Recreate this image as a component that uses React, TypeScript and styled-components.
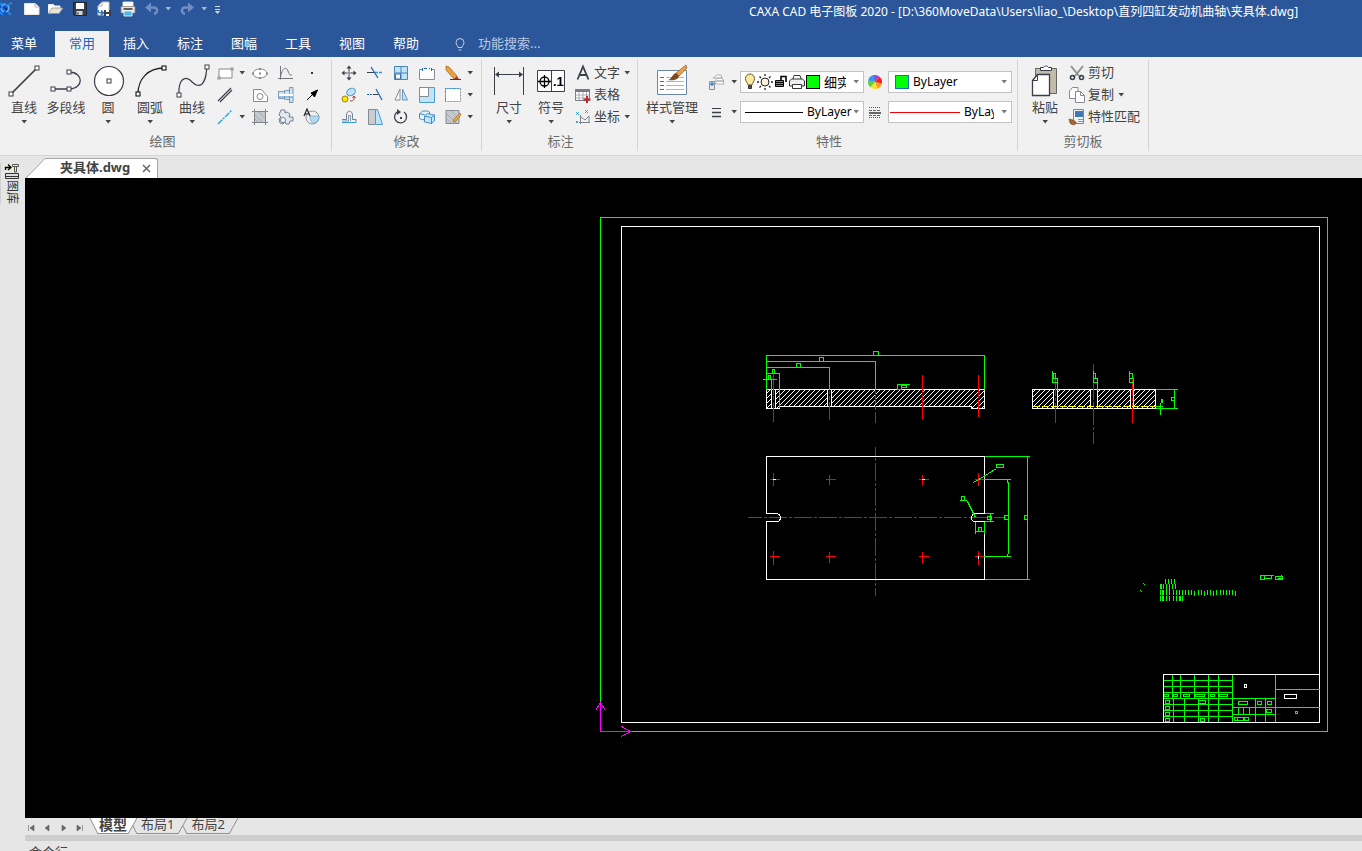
import React from 'react';
import styled, { createGlobalStyle } from 'styled-components';

const C = {
  blue: '#2b579a',
  ribbon: '#f1f1f1',
  chrome: '#e6e6e6',
  line: '#d4d4d4',
  text: '#444444',
  muted: '#6a6a6a',
  ink: '#3b3f4a',
  sky: '#bfe4f8',
  azure: '#2f9bdc',
  green: '#00ff00',
};

const Global = createGlobalStyle`
  *, *::before, *::after { box-sizing: border-box; }
  body {
    margin: 0;
    background: ${C.chrome};
    color: ${C.text};
    font-family: 'Noto Sans', 'Noto Sans CJK SC', sans-serif;
    font-size: 13px;
  }
  button, input, select { font: inherit; color: inherit; }
  button { border: 0; padding: 0; background: none; }
  svg { display: block; flex: none; overflow: visible; }
`;

const Page = styled.div`
  display: flex;
  flex-direction: column;
  height: 100vh;
  overflow: hidden;
`;

/* ---------- header ---------- */
const Header = styled.header`
  background: ${C.blue};
  color: #fff;
`;
const TitleBar = styled.div`
  display: grid;
  grid-template-columns: 55% 1fr;
  height: 31px;
  padding-top: 1px;
`;
const QuickAccess = styled.div`
  display: flex;
  align-items: center;
  gap: 8px;
  height: 16px;
`;
const IconButton = styled.button`
  display: flex;
  align-items: center;
  gap: 4px;
`;
const Title = styled.h1`
  margin: 0;
  font-size: 12px;
  font-weight: 400;
  line-height: 22px;
  white-space: nowrap;
`;
const TabRow = styled.nav`
  display: flex;
  height: 26px;
`;
const MenuButton = styled.button`
  width: 48px;
  margin-right: 7px;
  padding-bottom: 4px;
`;
const RibbonTab = styled.button<{ $active?: boolean }>`
  width: 54px;
  padding-bottom: 4px;
  background: ${p => (p.$active ? C.ribbon : 'transparent')};
  color: ${p => (p.$active ? '#1a66bd' : '#fff')};
`;
const Search = styled.label`
  display: flex;
  align-items: center;
  gap: 10px;
  margin-left: 19px;
`;
const SearchInput = styled.input`
  width: 120px;
  padding: 0 0 3px;
  border: 0;
  outline: 0;
  background: none;
  line-height: 20px;
  &::placeholder { color: #b9c9e4; opacity: 1; }
`;

/* ---------- ribbon ---------- */
const Ribbon = styled.section`
  display: flex;
  padding: 3px 0 4px;
  background: ${C.ribbon};
  border-bottom: 1px solid ${C.line};
`;
const Group = styled.section<{ $pad: number; $right?: number }>`
  display: flex;
  flex-direction: column;
  padding: 2px ${p => p.$right ?? 5}px 0 ${p => p.$pad}px;
  border-right: 1px solid ${C.line};
`;
const GroupBody = styled.div`
  display: flex;
  height: 66px;
`;
const GroupName = styled.h2`
  margin: 0;
  padding: 3px 0 0 2px;
  font-size: 13px;
  font-weight: 400;
  line-height: 20px;
  text-align: center;
  color: ${C.muted};
`;
const BigButton = styled.button<{ $wide?: boolean }>`
  display: flex;
  flex-direction: column;
  align-items: center;
  width: ${p => (p.$wide ? 56 : 42)}px;
  padding-top: 3px;
  line-height: 20px;
  white-space: nowrap;
`;
const BigCaret = styled.span`
  padding-top: 3px;
`;
const ToolGrid = styled.div<{ $columns: string }>`
  display: grid;
  grid-template-columns: ${p => p.$columns};
  grid-auto-rows: 22px;
  padding-left: 4px;
`;
const Tool = styled.button`
  display: flex;
  align-items: center;
  gap: 5px;
`;
const ToolList = styled.div`
  display: flex;
  flex-direction: column;
  padding-left: 3px;
`;
const TextTool = styled.button`
  display: flex;
  align-items: center;
  gap: 3px;
  height: 22px;
  white-space: nowrap;
`;
const ToolText = styled.span`
  padding-bottom: 3px;
  line-height: 18px;
`;
const PropertyRows = styled.div`
  display: flex;
  flex-direction: column;
  gap: 8px;
  padding: 9px 0 0 8px;
`;
const PropertyRow = styled.div`
  display: flex;
  align-items: center;
  height: 22px;
`;
const PropertyTool = styled.button`
  display: flex;
  align-items: center;
  gap: 6px;
  width: 32px;
`;
const WheelTool = styled.button`
  margin: 0 5px 0 3px;
`;
const Combo = styled.label<{ $pad: number }>`
  display: flex;
  align-items: center;
  width: 124px;
  height: 22px;
  padding: 0 3px 0 ${p => p.$pad}px;
  border: 1px solid #c3c3c3;
  background: #fff;
  color: #000;
`;
const ComboSelect = styled.select<{ $size?: number }>`
  flex: 1;
  min-width: 0;
  padding: 0;
  border: 0;
  outline: 0;
  appearance: none;
  background: none;
  font-size: ${p => p.$size ?? 12}px;
  line-height: 18px;
`;
const ComboArrow = styled.span`
  padding-left: 6px;
`;
const LinePreview = styled.span<{ $color: string; $width: number }>`
  flex: none;
  width: ${p => p.$width}px;
  height: 1px;
  margin-right: 4px;
  background: ${p => p.$color};
`;
const Swatch = styled.span<{ $edge: string; $gap: number }>`
  flex: none;
  width: 14px;
  height: 14px;
  margin-right: ${p => p.$gap}px;
  border: 1px solid ${p => p.$edge};
  background: ${C.green};
`;

/* ---------- workspace ---------- */
const Workspace = styled.main`
  display: flex;
  flex: 1;
  min-height: 0;
`;
const Dock = styled.aside`
  flex: none;
  width: 25px;
  padding-top: 7px;
`;
const DockTab = styled.button`
  display: flex;
  flex-direction: column;
  align-items: center;
  gap: 1px;
  width: 22px;
  border-left: 1px solid #cfcfcf;
  color: #333;
`;
const DockText = styled.span`
  writing-mode: vertical-rl;
  text-orientation: sideways;
  font-size: 12px;
  line-height: 16px;
`;
const Column = styled.div`
  display: flex;
  flex: 1;
  flex-direction: column;
  min-width: 0;
`;
const DocTabs = styled.div`
  display: flex;
  align-items: flex-end;
  height: 22px;
`;
const DocTab = styled.div`
  display: flex;
  align-items: center;
  gap: 12px;
  height: 20px;
  padding: 0 6px 0 14px;
  border: solid #a5a5a5;
  border-width: 1px 1px 0 0;
  border-radius: 0 3px 0 0;
  background: #fff;
`;
const DocName = styled.button`
  padding-bottom: 3px;
  font-size: 13px;
  font-weight: 700;
  line-height: 18px;
`;
const Canvas = styled.div`
  flex: 1;
  min-height: 0;
  overflow: hidden;
  background: #000;
`;
const SheetBar = styled.div`
  display: flex;
  height: 17px;
`;
const SheetNav = styled.div`
  display: flex;
  align-items: center;
  gap: 8px;
  padding: 2px 7px 0 2px;
`;
const SheetTab = styled.button<{ $active?: boolean }>`
  height: 16px;
  padding: 0 ${p => (p.$active ? 1 : 4)}px 2px;
  border-bottom: 1px solid #8f8f8f;
  background: ${p => (p.$active ? '#fff' : 'transparent')};
  font-size: ${p => (p.$active ? 14 : 13)}px;
  font-weight: ${p => (p.$active ? 700 : 400)};
  line-height: 13px;
  white-space: nowrap;
`;
const Splitter = styled.div`
  height: 6px;
  background: #cdcdcd;
`;
const CommandBar = styled.div`
  height: 10px;
  padding-left: 4px;
  overflow: hidden;
  line-height: 22px;
`;

/* ---------- icons ---------- */
type IconProps = { size?: number; w?: number; children: React.ReactNode };
const Icon = ({ size = 16, w, children }: IconProps) => (
  <svg width={w ?? size} height={size} viewBox={`0 0 ${w ?? size} ${size}`} fill="none" stroke={C.ink} aria-hidden="true">
    {children}
  </svg>
);
const Caret = ({ color = '#444' }: { color?: string }) => (
  <svg width="8" height="4" viewBox="0 0 8 4" aria-hidden="true">
    <path d="M1.500 0h5.500L4.200 3.500z" fill={color} />
  </svg>
);
const Nodes = ({ at, s = 4, fill = '#fff' }: { at: [number, number][]; s?: number; fill?: string }) => (
  <>
    {at.map(([x, y]) => (
      <rect key={`${x}-${y}`} x={x - s / 2} y={y - s / 2} width={s} height={s} fill={fill} strokeWidth="1" />
    ))}
  </>
);

const AppLogo = () => (
  <Icon>
    <circle cx="1" cy="8" r="7" fill="#0d56c4" stroke="none" />
    <circle cx="5" cy="7" r="4" fill="#1b6fe0" stroke="#5fb4f5" strokeWidth="1.400" strokeDasharray="5 2" />
    <path d="M-2 4l4-2M0 11l3 3M8 11l3 3M9 3l3-1" stroke="#1d86e6" strokeWidth="2" />
    <path d="M4 6l3 3" stroke="#0a2f7a" strokeWidth="2" />
  </Icon>
);
const NewIcon = () => (
  <Icon><path d="M.5 2.500h10.500l4 3.500v7.500H.5z" fill="#fff" stroke="#e9e6df" /><path d="M11 2.500V6h4" stroke="#b7b2a8" /></Icon>
);
const OpenIcon = () => (
  <Icon><path d="M.5 12.500v-9h5l1 1.500H12v3" fill="#fff" stroke="#eee" /><path d="M.5 12.500L4 7h11L11 12.500z" fill="#e8e4da" stroke="#9a958a" strokeWidth=".8" /></Icon>
);
const SaveIcon = () => (
  <Icon><path d="M1.500 1.500h13v13h-12l-1-1z" fill="#3a3e49" stroke="#20242c" /><path d="M4 2h8v6H4z" fill="#fff" stroke="none" /><path d="M4.500 10h6v4h-6z" fill="#d7d7d7" stroke="none" /><path d="M6 11v3" /></Icon>
);
const SaveAsIcon = () => (
  <Icon><path d="M2 5l4-4h7v13H2z" fill="#fff" stroke="#c8c4ba" /><path d="M2 5h4V1" stroke="#b0aca2" /><path d="M2 9c0 3 2 3 5 3M5 9.500L7.500 12 5 14" stroke="#1e70c6" strokeWidth="1.500" /><path d="M8 9h7v6H8z" fill="#3a3e49" stroke="none" /><path d="M10 9h3v2h-3zM10 13h3v2h-3z" fill="#fff" stroke="none" /></Icon>
);
const PrintIcon = () => (
  <Icon><path d="M3 1h10v5H3z" fill="#fff" stroke="#e8e4da" /><path d="M1 5.500h14V12H1z" fill="#eae7e0" stroke="#8b8780" strokeWidth=".8" /><path d="M3.500 8h9" stroke="#333" strokeWidth="1.500" /><path d="M4 10h8v5H4z" fill="#4bb8ef" stroke="#fff" strokeWidth=".8" /></Icon>
);
const UndoIcon = ({ flip }: { flip?: boolean }) => (
  <Icon>
    <g transform={flip ? 'matrix(-1 0 0 1 15 0)' : undefined}>
      <path d="M4 6.500h5.500c4.500 0 5 5 .5 6.500" stroke="#6f8fc4" strokeWidth="2.400" />
      <path d="M7 1.500v10L1 6.500z" fill="#6f8fc4" stroke="none" />
    </g>
  </Icon>
);
const CustomizeIcon = () => (
  <svg width="8" height="10" viewBox="0 0 8 10" aria-hidden="true"><path d="M-1 2.500h5M-1 5.500h5" stroke="#d7d9df" /><path d="M-1 7h5L1.500 10z" fill="#d7d9df" /></svg>
);
const BulbSmall = () => (
  <Icon><path d="M6 11.500C6 9.500 4 9 4 6.500a4 4 0 0 1 8 0C12 9 10 9.500 10 11.500zM6.500 14h3" stroke="#c5cfe2" /></Icon>
);

const LineIcon = () => <Icon size={32}><path d="M3 29L29 3" strokeWidth="1.700" /><Nodes at={[[3, 29], [29, 3]]} /></Icon>;
const PolylineIcon = () => <Icon size={32}><path d="M3 24h16M19 7c15 0 15 17 0 17" strokeWidth="1.300" /><Nodes at={[[3, 24], [19, 24], [19, 7]]} /></Icon>;
const CircleIcon = () => <Icon size={32}><circle cx="17" cy="16" r="14.500" fill="#fff" strokeWidth="1.200" /><Nodes at={[[17, 16]]} /></Icon>;
const ArcIcon = () => <Icon size={32}><path d="M4 29C4 14 14 3 30 3" stroke="#222" strokeWidth="1.300" /><g stroke="#000"><Nodes at={[[4, 29], [30, 3]]} /></g></Icon>;
const SplineIcon = () => <Icon size={32}><path d="M3 30C2 14 9 11 14 15c5 5 8 7 12 4 4-4 4-9 5-17" strokeWidth="1.200" /><Nodes at={[[3, 30], [31, 2]]} /></Icon>;
const DimensionIcon = () => (
  <Icon size={32}><path d="M1.500 2v28M30.500 2v28M4 9.500h24" /><path d="M2 9.500l4-3v6zM30 9.500l-4-3v6z" fill={C.ink} stroke="none" /></Icon>
);
const SymbolIcon = () => (
  <Icon size={32}><path d="M2.500 5.500h27v21h-27zM16.500 5.500v21" fill="#fff" /><circle cx="9.500" cy="16.500" r="4.500" stroke="#000" strokeWidth="1.300" /><path d="M3 16.500h13M9.500 10v13" stroke="#000" strokeWidth="1.300" />
    <text x="18" y="21" fontFamily="Liberation Sans, sans-serif" fontSize="13" fontWeight="700" fill="#000" stroke="none">.1</text></Icon>
);
const StyleIcon = () => (
  <Icon size={32}><path d="M1.500 5.500h29v24h-29z" fill="#fff" stroke="#6a89a8" /><path d="M4 12.500h4M4 16.500h4M4 20.500h4M4 24.500h4" stroke="#56718f" /><path d="M10 12.500h18M10 16.500h18M10 20.500h18M10 24.500h18" stroke="#a9b6c8" /><path d="M30 0l1 3-8 8-3-3z" fill="#e8a04d" stroke="#9a5a1c" strokeWidth=".7" /><path d="M20 8l3 3c-1 4-6 5-11 4 4-1 4-6 8-7z" fill="#7a4a20" stroke="none" /></Icon>
);
const PasteIcon = () => (
  <Icon size={32}><path d="M6.500 3.500h21v25h-21z" fill="#c2baaa" stroke="#6a665e" /><path d="M11.500 5.500v-3h3c1-2 4-2 5 0h3v3z" fill="#fff" /><path d="M3.500 15.500l5-6h12v21h-17z" fill="#fff" strokeWidth="1.300" /><path d="M3.500 15.500h5v-6" /></Icon>
);

const G = '#868a92';
const RectIcon = () => <Icon><path d="M2 4h13v9H2z" stroke={G} fill="#fff" /><g stroke={G}><Nodes s={2} at={[[2, 13], [15, 4]]} /></g></Icon>;
const EllipseIcon = () => <Icon><ellipse cx="8" cy="8.500" rx="7" ry="4.500" stroke={G} fill="#fff" /><g stroke={G}><Nodes s={1} at={[[1, 8.5], [15, 8.5], [8, 4], [8, 8.5], [8, 13]]} /></g></Icon>;
const FormulaIcon = () => <Icon><path d="M2.500 1v13.500M0 13.500h15M2.500 12C4 3 8 1 10 6s2 4 4 4" stroke="#71757d" /></Icon>;
const PointIcon = () => <Icon><path d="M7 7h2v2H7z" fill="#333" stroke="none" /></Icon>;
const ParallelIcon = () => <Icon><path d="M1 14L14 1M3 15L15 3" strokeWidth="1.200" /></Icon>;
const ContourIcon = () => <Icon><path d="M1.500 14.500v-12h8l6 7v5z" fill="#fff" stroke={G} /><circle cx="8" cy="9.500" r="3" stroke={G} /></Icon>;
const ShaftIcon = () => (
  <Icon><path d="M.5 4.500h6v7h-6zM6.500 3.500h5v9h-5zM11.500.500h3.500v15h-3.500z" fill="#cfe3f4" stroke="#7d97b5" /><path d="M1 8h14" stroke="#fff" strokeWidth="2" /><path d="M1 10h14" stroke="#5f9bd0" /></Icon>
);
const ArrowIcon = () => <Icon><path d="M3 13l6-6" stroke="#000" /><path d="M13.500 3L7 6l3.500 4z" fill="#000" stroke="#000" /></Icon>;
const CenterLineIcon = () => <Icon><path d="M1 15L15 1" stroke="#22a4e6" strokeWidth="1.400" strokeDasharray="6 1 2 1" /></Icon>;
const HatchIcon = () => <Icon><path d="M2 2h12v12H2z" fill="#c5c8cd" stroke="none" /><path d="M2.500 0v16M13.500 0v16M0 2.500h16M0 13.500h16" stroke="#82868e" /><path d="M3 6l7 7M3 10l3 3M7 3l6 6" stroke="#9da1a8" strokeWidth=".8" /></Icon>;
const PartsIcon = () => <Icon><path d="M3 1h4v3l2-1 3 2-1 3h4v4h-3l-1 3H8l-1-2-2 2-3-1-1-4 2-2-2-2z" fill="#dfe8f1" stroke="#74808f" /><circle cx="5" cy="11" r="2.500" fill="#fff" stroke="#74808f" /></Icon>;
const BlockIcon = () => <Icon><circle cx="8.500" cy="8.500" r="6.500" stroke="#8a929c" /><path d="M6 7h9c0 4-2 7-5 7s-4-3-4-7z" fill="#a9dcf7" stroke="#8a929c" strokeWidth=".6" /><path d="M0 7L3 0l3 7M1 5h4" stroke="#222" strokeWidth="1.200" /></Icon>;

const MoveIcon = () => <Icon><path d="M8 3v3M8 10v3M3 8h3M10 8h3" /><path d="M8 0.500l2.500 3h-5zM8 15.500l2.500-3h-5zM.5 8l3-2.500v5zM15.500 8l-3-2.500v5z" fill={C.ink} stroke="none" /><path d="M7 7h2v2H7z" fill="#fff" strokeWidth=".7" /></Icon>;
const TrimIcon = () => <Icon><path d="M0 7.500h7" /><path d="M8 7.500h8" stroke={C.azure} strokeWidth="1.300" strokeDasharray="3 1" /><path d="M4 2l7 11" stroke="#1d67b8" strokeWidth="1.300" /></Icon>;
const ArrayIcon = () => <Icon><path d="M1.500 1.500h13v13h-13zM8 1.500v13M1.500 8h13" fill={C.sky} stroke="#4a86b4" /><path d="M2.500 9h5v5h-5z" fill="#fff" stroke="#3b70a8" /></Icon>;
const StretchIcon = () => <Icon><path d="M3 4.500H.5v10h15v-10H13" fill="#fff" stroke={G} /><path d="M3.500 3v3M12.500 3v3M5 3.500h6" stroke="#1d67b8" strokeDasharray="3 2" /></Icon>;
const EraseIcon = () => <Icon><path d="M1 1l3 1 8 9-3 3L1 5z" fill="#e9a23b" stroke="#99621d" strokeWidth=".7" /><path d="M9 14l3-3 2 3-2 1z" fill="#b13a2a" stroke="none" /><path d="M5 14.500h11" /></Icon>;
const CopyShapeIcon = () => <Icon><ellipse cx="10" cy="5" rx="4.500" ry="3.500" fill={C.sky} stroke="#4a96c8" transform="rotate(-30 10 5)" /><circle cx="4" cy="12" r="3" fill="#ffe600" stroke="#98821a" /><path d="M9 14c4 0 4-1 4-4M11.500 11l1.500-2 1.500 2" stroke="#b53a32" /></Icon>;
const ExtendIcon = () => <Icon><path d="M0 7.500h6" stroke="#1d67b8" strokeDasharray="2 1" /><path d="M6 7.500h5" /><path d="M9 2l6 11" stroke="#1d67b8" strokeWidth="1.300" /></Icon>;
const MirrorIcon = () => <Icon><path d="M7 2v11H2z" fill="#fff" stroke={G} /><path d="M9.500 2v11h5z" fill={C.sky} stroke="#6797bd" /></Icon>;
const ScaleIcon = () => <Icon><path d="M.5.500h15v15H.5z" fill={C.sky} stroke="#4c9ccf" /><path d="M.5.500h9v9h-9z" fill="#fff" stroke={G} /></Icon>;
const CropIcon = () => <Icon><path d="M.5 1.500h15v13H.5z" fill="#fff" stroke="#8b9096" strokeDasharray="2 1" /><path d="M.5 14.500v-13h15" stroke="#3c9ad4" strokeDasharray="3 1" /></Icon>;
const OffsetIcon = () => (
  <Icon><path d="M1 10.500h4.500V6c0-5 6-5 6 0v4.500H15v3H1" stroke="#6c8296" /><path d="M1 12h6.500V6.500h2V12" stroke="#6c8296" strokeWidth=".8" /><path d="M1 13.500h14" stroke={C.azure} /></Icon>
);
const TaperIcon = () => <Icon><path d="M1.500.500h7v15h-7z" fill="#c9ccd0" stroke={G} /><path d="M8.500.500h2l5 15h-7z" fill={C.sky} stroke="#4c9ccf" /></Icon>;
const RotateIcon = () => <Icon><path d="M11 3a6 6 0 1 1-6-.5" strokeWidth="1.300" /><path d="M4 0l4 3-4 3z" fill={C.ink} stroke="none" /><path d="M7 8h2v2H7z" fill={C.ink} stroke="none" /></Icon>;
const CubeIcon = () => (
  <Icon><path d="M.5 5l3-3h5l2 1v5l-3 3-5-.5-2-1z" fill="#e4f4fc" stroke="#4a8fc0" /><path d="M5.500 7l3-2.500 7 1.500v6l-3 2.500-7-1.500z" fill={C.sky} stroke="#4a8fc0" /><path d="M.5 5l5 .5M5.500 7l7 1.500v6M12.500 8.500l3-2.500" stroke="#4a8fc0" /></Icon>
);
const HatchEditIcon = () => <Icon><path d="M1 1.500h13v13H1z" fill="#c5c8cd" stroke={G} /><path d="M2 5l9 9M2 10l4 4M6 2l8 8" stroke="#a0a4ab" strokeWidth=".8" /><path d="M15 4l-6 6-1 3 3-1 5-6z" fill="#f0a53c" stroke="#8f6520" strokeWidth=".6" /></Icon>;
const LetterIcon = () => <Icon><path d="M2.500 14.500L8 1.500l5.500 13M4.500 10h7" strokeWidth="1.800" /></Icon>;
const TableIcon = () => <Icon><path d="M.5 2.500h14v11H.5z" fill="#fff" stroke="#777c85" /><path d="M.5 2h14v3H.5z" fill="#777c85" stroke="none" /><path d="M.5 8h14M.5 11h14M4 5v8M8 5v8M11.500 5v8" stroke="#9aa0a9" strokeWidth=".8" /><path d="M12 9v7M8.500 12.500h7" stroke="#c8232c" strokeWidth="2" /></Icon>;
const CoordIcon = () => (
  <Icon><path d="M5.500 6v9M4 13.500h11M6 8l4 3 4-4v7" stroke="#7d828a" /><path d="M1 3l3 3M4 3L1 6M10 1l3 3M13 1l-3 3M1 12l2 2M3 12l-2 2" stroke={C.azure} strokeWidth=".9" /></Icon>
);
const LayersIcon = () => (
  <Icon><path d="M5 4l4-3h4l1 3h-5zM7 7l2-3h5l2 3h-6zM7 10l2-3h6l1 3z" fill="#fff" stroke="#9a9fa7" strokeWidth=".8" /><path d="M1.500 7.500h5v8h-5z" fill="#e4e9ef" stroke="#8a929c" /><path d="M2.500 8.500h3v3h-3z" fill="#3779b9" stroke="none" /></Icon>
);
const WeightIcon = () => <Icon><path d="M4 4.500h9" /><path d="M4 8.500h9M4 12.500h9" strokeWidth="1.600" /></Icon>;
const LineTypeIcon = () => <Icon><path d="M2 3.500h12M2 13.500h12" stroke="#555" strokeDasharray="1 1" /><path d="M2 6.500h12M2 11.500h12" stroke="#666" strokeDasharray="3 1" /><path d="M2 9h12" stroke="#444" strokeWidth="1.600" /></Icon>;
const wheel = ['#ff9d1e', '#ffe11f', '#5fce3a', '#2b9bf0', '#8a4bd8', '#f0395c'];
const wheelPoint = (i: number) => {
  const a = (i * Math.PI) / 3 + 0.2;
  return `${(8 + 7 * Math.cos(a)).toFixed(2)} ${(8 + 7 * Math.sin(a)).toFixed(2)}`;
};
const wheelOrder = [wheel[0], wheel[1], wheel[2], wheel[3], wheel[4], '#fa1e1e'];
const WheelIcon = () => (
  <Icon>
    {wheelOrder.map((c, i) => (
      <path key={c} fill={c} stroke="none" d={`M8 8L${wheelPoint(i)}A7 7 0 0 1 ${wheelPoint(i + 1)}z`} />
    ))}
  </Icon>
);
const BulbIcon = () => <Icon w={12} size={18}><path d="M4 12C4 10 1.500 9 1.500 5.500a4.500 4.500 0 0 1 9 0C10.500 9 8 10 8 12z" fill="#ffe9a0" stroke="#6d5a2a" /><path d="M4.500 12.500h3v3h-3z" fill="#555" stroke="#333" /></Icon>;
const SunIcon = () => <Icon size={18}><circle cx="9" cy="9" r="4" fill="#fff3dc" stroke="#222" /><path d="M9 1v2M9 15v2M1 9h2M15 9h2M3.500 3.500l1.500 1.500M13 13l1.500 1.500M3.500 14.500L5 13M13 5l1.500-1.500" stroke="#222" strokeWidth="1.300" /></Icon>;
const LockIcon = () => <Icon w={14} size={18}><path d="M1.500 7.500h8v6h-8z" fill="#a09a00" stroke="#000" /><path d="M1 9.500h9M1 11.500h9" stroke="#000" /><path d="M7 7V3.500h5V9" stroke="#000" strokeWidth="1.600" /></Icon>;
const PlotIcon = () => <Icon size={18}><path d="M4.500 7L6 2.500h6L13.500 7" fill="#fff" stroke="#333" /><path d="M1.500 8l2-2h11l2 2v5h-15z" fill="#eee" stroke="#333" /><path d="M4.500 11.500h9v4h-9z" fill="#fff" stroke="#333" /></Icon>;
const CutIcon = () => <Icon><path d="M2 1l8 10M14 1L6 11" stroke="#8c8f95" strokeWidth="2" /><path d="M5 11l-1 0M11 11l1 0" strokeWidth="2" /><circle cx="3.500" cy="12.500" r="2" strokeWidth="1.600" /><circle cx="12.500" cy="12.500" r="2" strokeWidth="1.600" /></Icon>;
const CopyIcon = () => <Icon><path d="M.5 4l3-3.500h5.500v11H.5z" fill="#fff" stroke={G} /><path d="M6.500 4.500h5l4 4v7h-9z" fill="#fff" stroke={G} /><path d="M11.500 4.500v4h4" stroke={G} /></Icon>;
const MatchIcon = () => <Icon><path d="M4.500.500h10v14h-10z" fill="#eef2f6" stroke="#7a8794" /><path d="M6 2h8v6H6z" fill="#4079b4" stroke="none" /><path d="M9 10.500h5M9 12.500h5" stroke="#8a949f" /><path d="M0 10l4 1 3 2c1 3-4 4-6 1z" fill="#a8652a" stroke="#70401a" strokeWidth=".6" /></Icon>;
const LibraryIcon = () => (
  <Icon><path d="M1 1h14v8H1z" fill="#e9edd2" stroke="none" /><path d="M1.500 7V4.500H6M4 1.500L7 4.500 4 7" stroke="#000" strokeWidth="1.300" /><path d="M8.500 1.500h6v2h-6zM10.500 4v5h2V4" stroke="#555" /><path d="M1.500 10.500h13v5h-13z" fill="#ddd" stroke="#333" /><path d="M2 13.500h12" stroke="#333" /></Icon>
);

/* ---------- drawing ---------- */
type Box = [number, number, number, number];
const boxes = (list: Box[]) => list.map(([a, b, c, d]) => `M${a} ${b}H${c}V${d}H${a}z`).join('');
const hLines = (ys: number[], a: number, b: number) => ys.map(y => `M${a} ${y}H${b}`).join('');
const vLines = (xs: number[], a: number, b: number) => xs.map(x => `M${x} ${a}V${b}`).join('');

const noteRows = [
  vLines([1165, 1168, 1171, 1174], 578, 583),
  vLines([1160, 1161, 1163, 1166, 1169, 1172, 1175], 583, 588),
  vLines([1160, 1162, 1163, 1173, 1176, 1179, 1182, 1185, 1188, 1191, 1198, 1201, 1207, 1210, 1216, 1220, 1223, 1226, 1229, 1232], 589, 594),
  vLines([1194, 1204, 1213, 1235], 590, 595),
  vLines([1166, 1169], 583, 594),
  vLines([1160, 1162, 1163, 1166, 1169, 1173, 1176, 1179, 1180, 1182], 595, 600),
].join('');

const holes: Box[] = [
  [773, 479, 472, 485], [829, 479, 474, 484], [922, 479, 474, 484], [978, 479, 472, 485],
  [773, 556, 550, 564], [829, 556, 551, 562], [922, 556, 551, 562], [978, 556, 550, 564],
];

const Drawing = () => (
  <svg width="1337" height="640" viewBox="25 178 1337 640" role="img" aria-label="夹具体.dwg">
    <defs>
      <pattern id="hatch" width="5" height="5" patternUnits="userSpaceOnUse">
        <path d="M0 4h1v1H0zM1 3h1v1H1zM2 2h1v1H2zM3 1h1v1H3zM4 0h1v1H4z" fill="#fff" />
      </pattern>
    </defs>
    <g fill="url(#hatch)" shapeRendering="crispEdges">
      <path d="M766 389H772V408H766zM775 389H828V406H779V408H775zM831 389H985V408H971V406H831z" />
      <path d="M1032 389H1054V408H1032zM1057 389H1091V408H1057zM1097 389H1131V408H1097zM1133 389H1156V408H1133z" />
    </g>
    <g transform="translate(.5 .5)" fill="none" strokeWidth="1" shapeRendering="crispEdges">
      <path stroke={C.green} d="M600 217H1327V731H600z" />
      <path stroke="#fff" d="M621 226H1319V722H621z" />

      {/* front section */}
      <path stroke="#fff" d="M766 389H984V408H971V406H779V408H766zM771 389V408M775 389V408M827 389V406M831 389V406" />
      <path stroke="red" d="M773 373V394M773 395V399M773 401V421M829 390V393M829 395V399M829 401V419M875 390V403M875 405V409M875 411V422M922 374V392M922 394V398M922 399V418M978 374V392M978 393V397M978 399V416" />
      <path stroke={C.green} d="M766 355H984M766 361H875M766 367H829M766 373H779M762 379H776M766 354V389M984 354V389M875 360V389M829 366V389M779 372V407M771 379V389M897 389V384H909M897 389H901V384" />
      <path stroke={C.green} d={boxes([[873, 351, 878, 355], [819, 357, 823, 361], [796, 363, 800, 367], [772, 369, 774, 373], [768, 375, 770, 379], [901, 385, 906, 387]])} />

      {/* plan view */}
      <path stroke="red" strokeDasharray="18 2 3 2" strokeDashoffset="4" d="M747 517H1005" />
      <path stroke="red" strokeDasharray="18 2 3 2" strokeDashoffset="9" d="M875 446V595" />
      {holes.map(([x, y, a, b]) => <path key={`${x}-${y}`} stroke="red" d={`M${x - 4} ${y}H${x + 6}M${x} ${a}V${b}`} />)}
      <path stroke="#fff" d="M766 456H984V513H975Q971 514 971 517Q971 520 973 521H984V579H766V521H778Q780 519 780 517Q780 514 776 513H766z" />
      <path stroke="#fff" d="M772 479H775M921 479H924M978 555V558" />
      <path stroke={C.green} d="M984 456H1029M984 579H1029M1027 456V579M983 479H1010M983 556H1010M1008 481V553M1007 479V482M1007 553V556M984 513H993M984 521H993M990 513V521M975 521V533M984 521V533M975 531H984M973 482L980 478L996 468M959 500H966M967 501L972 511L975 517" />
      <path stroke={C.green} d={boxes([[1024, 515, 1027, 519], [1004, 515, 1008, 519], [987, 516, 991, 519], [978, 527, 981, 531], [996, 464, 1003, 467], [961, 496, 964, 500]])} />

      {/* side section */}
      <path stroke="#fff" d="M1032 389H1155V408H1032zM1053 389V408M1057 389V408M1090 389V408M1097 389V408M1130 389V408M1133 389V408" />
      <path stroke="red" d="M1055 377V395M1055 397V400M1055 402V422M1093 363V399M1093 401V405M1093 407V424M1093 426V429M1093 431V443M1132 379V395M1132 397V400M1132 402V422" />
      <path stroke="#ff0" strokeDasharray="7 2" d="M1032 406H1155" />
      <path stroke={C.green} d="M1052 370V382H1057M1055 378H1057V389M1093 370V382H1097M1095 378H1097V389M1129 370V382H1133M1132 378H1133V389M1155 389H1177M1155 408H1177M1174 389V408M1160 402V414M1154 406H1162M1161 398V402M1162 398V402" />
      <path stroke={C.green} d={boxes([[1053, 373, 1055, 378], [1093, 373, 1095, 378], [1129, 373, 1132, 378], [1171, 397, 1174, 400]])} />

      {/* notes */}
      <path stroke={C.green} d={noteRows} />
      <path stroke={C.green} d={`${boxes([[1260, 575, 1264, 579], [1264, 575, 1271, 578], [1275, 576, 1282, 579]])}M1271 575H1273M1281 574V576M1277 578H1281M1143 583L1145 585M1140 590L1142 592`} />

      {/* title block */}
      <path stroke={C.green} d={hLines([680, 686, 692, 698, 704, 710, 716], 1163, 1232)} />
      <path stroke={C.green} d={vLines([1172, 1180, 1194, 1208, 1218], 674, 698) + vLines([1173, 1184, 1198, 1208, 1218], 698, 722) + vLines([1232, 1275], 674, 722) + vLines([1255, 1265], 698, 722) + vLines([1238, 1243, 1249], 707, 714)} />
      <path stroke={C.green} d="M1232 698H1275M1275 689H1319M1232 707H1319M1232 714H1275" />
      <path stroke={C.green} d={boxes([
        [1164, 694, 1168, 696], [1173, 694, 1177, 696], [1183, 694, 1189, 696], [1195, 694, 1204, 696], [1210, 694, 1214, 696], [1219, 694, 1227, 696],
        [1165, 700, 1169, 703], [1165, 706, 1169, 709], [1165, 712, 1169, 715], [1165, 718, 1169, 721], [1198, 700, 1205, 703], [1200, 718, 1204, 721],
        [1238, 701, 1247, 704], [1257, 701, 1261, 704], [1267, 701, 1271, 704], [1266, 709, 1271, 712], [1234, 717, 1237, 720], [1237, 717, 1243, 720], [1244, 717, 1248, 720], [1295, 711, 1297, 713],
      ])} />
      <path stroke="#fff" d={`M1163 722V674H1319M621 722H1319${boxes([[1244, 684, 1246, 687], [1284, 694, 1296, 698]])}`} />

      {/* axis marker */}
      <path stroke="#f0f" d="M600 702V731H630M595 710L600 702L605 710M621 726L630 731L621 736" />
    </g>
  </svg>
);

/* ---------- data ---------- */
const tabs = ['常用', '插入', '标注', '图幅', '工具', '视图', '帮助'];
type ToolDef = [string, () => React.ReactElement, boolean?];
const drawBig: ToolDef[] = [['直线', LineIcon, true], ['多段线', PolylineIcon], ['圆', CircleIcon, true], ['圆弧', ArcIcon, true], ['曲线', SplineIcon, true]];
const drawSmall: ToolDef[] = [
  ['矩形', RectIcon, true], ['椭圆', EllipseIcon], ['公式曲线', FormulaIcon], ['点', PointIcon],
  ['平行线', ParallelIcon], ['局部放大', ContourIcon], ['孔/轴', ShaftIcon], ['箭头', ArrowIcon],
  ['中心线', CenterLineIcon, true], ['填充', HatchIcon], ['齿轮', PartsIcon], ['块', BlockIcon],
];
const modifySmall: ToolDef[] = [
  ['平移', MoveIcon], ['裁剪', TrimIcon], ['阵列', ArrayIcon], ['打断', StretchIcon], ['删除', EraseIcon, true],
  ['平移复制', CopyShapeIcon], ['延伸', ExtendIcon], ['镜像', MirrorIcon], ['缩放', ScaleIcon], ['过渡', CropIcon, true],
  ['等距线', OffsetIcon], ['拉伸', TaperIcon], ['旋转', RotateIcon], ['分解', CubeIcon], ['编辑填充', HatchEditIcon, true],
];
const annotate: ToolDef[] = [['文字', LetterIcon, true], ['表格', TableIcon], ['坐标', CoordIcon, true]];
const clipboard: ToolDef[] = [['剪切', CutIcon], ['复制', CopyIcon, true], ['特性匹配', MatchIcon]];
const navPaths: [string, string][] = [
  ['首页', 'M1.500 1v6M7 1v6L3 4z'], ['上一页', 'M6 1v6L2 4z'], ['下一页', 'M3 1v6l4-3z'], ['末页', 'M7.500 1v6M2 1v6l4-3z'],
];

const Big = ({ def: [name, Glyph, menu], wide }: { def: ToolDef; wide?: boolean }) => (
  <BigButton $wide={wide}>
    <Glyph />
    {name}
    {menu && <BigCaret><Caret /></BigCaret>}
  </BigButton>
);
const Small = ({ def: [name, Glyph, menu] }: { def: ToolDef }) => (
  <Tool aria-label={name}><Glyph />{menu && <Caret />}</Tool>
);
const Labelled = ({ def: [name, Glyph, menu] }: { def: ToolDef }) => (
  <TextTool><Glyph /><ToolText>{name}</ToolText>{menu && <Caret />}</TextTool>
);

const SheetEdge = ({ left, fill }: { left?: boolean; fill?: string }) => (
  <svg width={left ? 8 : 9} height="17" viewBox={left ? '0 0 8 17' : '0 0 9 17'} aria-hidden="true">
    {fill && <path d={left ? 'M0 0h8v16z' : 'M0 0h9L0 16z'} fill={fill} />}
    <path d={left ? 'M0 0l8 16' : 'M9 0L0 16M5 8l4 8'} stroke="#8f8f8f" fill="none" />
  </svg>
);

export default function App() {
  return (
    <>
      <Global />
      <Page>
        <Header>
          <TitleBar>
            <QuickAccess>
              <IconButton aria-label="CAXA"><AppLogo /></IconButton>
              <IconButton aria-label="新建"><NewIcon /></IconButton>
              <IconButton aria-label="打开"><OpenIcon /></IconButton>
              <IconButton aria-label="保存"><SaveIcon /></IconButton>
              <IconButton aria-label="另存为"><SaveAsIcon /></IconButton>
              <IconButton aria-label="打印"><PrintIcon /></IconButton>
              <IconButton aria-label="撤销"><UndoIcon /><Caret color="#a9b9d6" /></IconButton>
              <IconButton aria-label="重做"><UndoIcon flip /><Caret color="#a9b9d6" /></IconButton>
              <IconButton aria-label="自定义"><CustomizeIcon /></IconButton>
            </QuickAccess>
            <Title>CAXA CAD 电子图板 2020 - [D:\360MoveData\Users\liao_\Desktop\直列四缸发动机曲轴\夹具体.dwg]</Title>
          </TitleBar>
          <TabRow>
            <MenuButton>菜单</MenuButton>
            {tabs.map((t, i) => <RibbonTab key={t} $active={i === 0}>{t}</RibbonTab>)}
            <Search>
              <BulbSmall />
              <SearchInput type="text" placeholder="功能搜索..." aria-label="功能搜索" />
            </Search>
          </TabRow>
        </Header>

        <Ribbon>
          <Group $pad={3} $right={11}>
            <GroupBody>
              {drawBig.map(d => <Big key={d[0]} def={d} />)}
              <ToolGrid $columns="35px 26px 26px 16px">{drawSmall.map(d => <Small key={d[0]} def={d} />)}</ToolGrid>
            </GroupBody>
            <GroupName>绘图</GroupName>
          </Group>
          <Group $pad={5} $right={7}>
            <GroupBody>
              <ToolGrid $columns="26px 26px 26px 26px 29px">{modifySmall.map(d => <Small key={d[0]} def={d} />)}</ToolGrid>
            </GroupBody>
            <GroupName>修改</GroupName>
          </Group>
          <Group $pad={6} $right={6}>
            <GroupBody>
              <Big def={['尺寸', DimensionIcon, true]} />
              <Big def={['符号', SymbolIcon, true]} />
              <ToolList>{annotate.map(d => <Labelled key={d[0]} def={d} />)}</ToolList>
            </GroupBody>
            <GroupName>标注</GroupName>
          </Group>
          <Group $pad={6}>
            <GroupBody>
              <Big wide def={['样式管理', StyleIcon, true]} />
              <PropertyRows>
                <PropertyRow>
                  <PropertyTool aria-label="图层"><LayersIcon /><Caret /></PropertyTool>
                  <Combo $pad={3}>
                    <BulbIcon /><SunIcon /><LockIcon /><PlotIcon />
                    <Swatch $edge="#000" $gap={4} />
                    <ComboSelect $size={13} aria-label="当前图层"><option>细实线层</option></ComboSelect>
                    <ComboArrow><Caret color="#777" /></ComboArrow>
                  </Combo>
                  <WheelTool aria-label="颜色"><WheelIcon /></WheelTool>
                  <Combo $pad={6}>
                    <Swatch $edge="#1a6fc0" $gap={4} />
                    <ComboSelect aria-label="当前颜色"><option>ByLayer</option></ComboSelect>
                    <ComboArrow><Caret color="#777" /></ComboArrow>
                  </Combo>
                </PropertyRow>
                <PropertyRow>
                  <PropertyTool aria-label="线宽"><WeightIcon /><Caret /></PropertyTool>
                  <Combo $pad={4}>
                    <LinePreview $color="#000" $width={58} />
                    <ComboSelect aria-label="当前线宽"><option>ByLayer</option></ComboSelect>
                    <Caret color="#777" />
                  </Combo>
                  <WheelTool aria-label="线型"><LineTypeIcon /></WheelTool>
                  <Combo $pad={1}>
                    <LinePreview $color="#f00000" $width={70} />
                    <ComboSelect aria-label="当前线型"><option>ByLayer</option></ComboSelect>
                    <ComboArrow><Caret color="#777" /></ComboArrow>
                  </Combo>
                </PropertyRow>
              </PropertyRows>
            </GroupBody>
            <GroupName>特性</GroupName>
          </Group>
          <Group $pad={6} $right={8}>
            <GroupBody>
              <Big def={['粘贴', PasteIcon, true]} />
              <ToolList>{clipboard.map(d => <Labelled key={d[0]} def={d} />)}</ToolList>
            </GroupBody>
            <GroupName>剪切板</GroupName>
          </Group>
        </Ribbon>

        <Workspace>
          <Dock>
            <DockTab><LibraryIcon /><DockText>图库</DockText></DockTab>
          </Dock>
          <Column>
            <DocTabs>
              <svg width="21" height="20" viewBox="0 0 21 20" aria-hidden="true">
                <path d="M1 20L20 .5h1V20z" fill="#fff" /><path d="M1 20L20 .5h1" fill="none" stroke="#a5a5a5" />
              </svg>
              <DocTab>
                <DocName>夹具体.dwg</DocName>
                <IconButton aria-label="关闭">
                  <svg width="9" height="9" viewBox="0 0 9 9" aria-hidden="true"><path d="M1 1l7 7M8 1L1 8" stroke="#666" strokeWidth="1.500" /></svg>
                </IconButton>
              </DocTab>
            </DocTabs>
            <Canvas><Drawing /></Canvas>
            <SheetBar>
              <SheetNav>
                {navPaths.map(([name, d]) => (
                  <IconButton key={name} aria-label={name}>
                    <svg width="8" height="8" viewBox="0 0 8 8" aria-hidden="true"><path d={d} fill="#666" stroke="#666" strokeWidth=".6" /></svg>
                  </IconButton>
                ))}
              </SheetNav>
              <SheetEdge left fill="#fff" />
              <SheetTab $active>模型</SheetTab>
              <SheetEdge fill="#fff" />
              <SheetTab>布局1</SheetTab>
              <SheetEdge />
              <SheetTab>布局2</SheetTab>
              <svg width="9" height="17" viewBox="0 0 9 17" aria-hidden="true"><path d="M9 0L0 16" stroke="#8f8f8f" /></svg>
            </SheetBar>
            <Splitter />
            <CommandBar>命令行</CommandBar>
          </Column>
        </Workspace>
      </Page>
    </>
  );
}
